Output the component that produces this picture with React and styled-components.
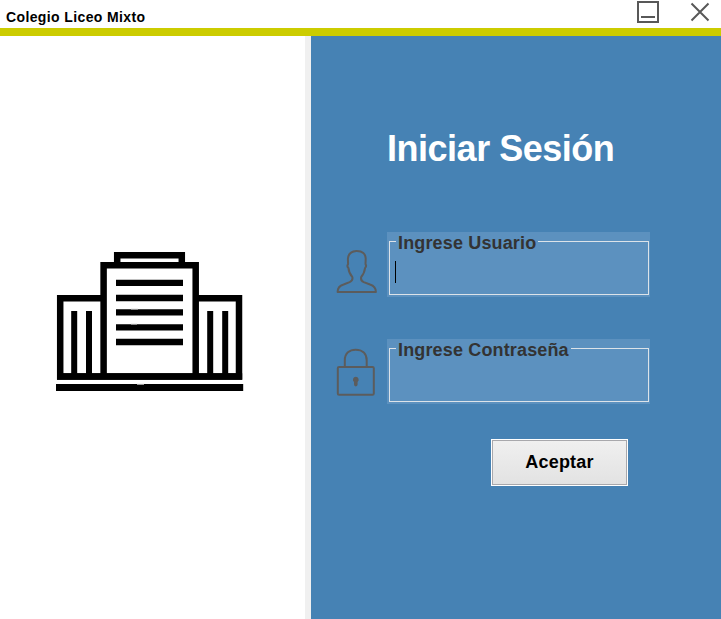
import React from "react";
import styled, { createGlobalStyle } from "styled-components";

const GlobalStyle = createGlobalStyle`
  * { box-sizing: border-box; }
  body { margin: 0; overflow: hidden; font-family: "Liberation Sans", Arial, sans-serif; }
`;

const Window = styled.div`
  width: 721px;
  height: 619px;
  display: flex;
  flex-direction: column;
  background: #fff;
`;

const TitleBar = styled.header`
  height: 36px;
  display: flex;
  justify-content: space-between;
  border-bottom: 8px solid #cccc00;
  padding: 0 10px 0 6px;
`;

const WindowTitle = styled.div`
  font-size: 14px;
  font-weight: bold;
  line-height: 16px;
  letter-spacing: 0.38px;
  padding-top: 9px;
  color: #000;
  white-space: nowrap;
`;

const Controls = styled.div`
  display: flex;
  gap: 29px;
`;

const ControlButton = styled.button`
  display: block;
  border: 0;
  padding: 0;
  background: none;
  width: ${(p) => p.$width}px;
  height: 24px;

  svg { display: block; }
`;

const Body = styled.main`
  flex: 1;
  display: flex;
`;

const LogoPanel = styled.section`
  width: 311px;
  border-right: 6px solid #f0f0f0;
  padding: 214px 0 0 54px;
`;

const LoginPanel = styled.section`
  flex: 1;
  background: #4682b4;
  display: flex;
  flex-direction: column;
  padding-top: 92px;
`;

const Heading = styled.h1`
  margin: 0 0 0 76px;
  font-size: 36px;
  line-height: 42px;
  letter-spacing: -0.48px;
  color: #fff;
  white-space: nowrap;
`;

const Form = styled.form`
  margin-top: 62px;
  display: flex;
  flex-direction: column;
  gap: 42px;
`;

const FieldRow = styled.div`
  display: flex;
  height: 65px;
  padding-left: 22px;
`;

const IconCell = styled.div`
  width: 54px;
  padding: ${(p) => p.$top}px 0 0 2px;

  svg { display: block; }
`;

const FieldBox = styled.div`
  width: 263px;
  height: 65px;
  padding: 0 1px 2px 2px;
  background: #5c91bf;
`;

const FieldFrame = styled.fieldset`
  height: 63px;
  min-width: 0;
  margin: 0;
  padding: 0 5px;
  border: 1px solid #dce3e9;
`;

const Legend = styled.legend`
  height: 19px;
  margin-left: 1px;
  padding: 1px 2px 0 2px;
  font-size: 18px;
  line-height: 20px;
  letter-spacing: 0.15px;
  font-weight: bold;
  color: #333;
  white-space: nowrap;
`;

const Input = styled.input`
  display: block;
  width: 100%;
  height: 42px;
  border: 0;
  padding: 0;
  outline: none;
  background: transparent;
  font: 18px "Liberation Sans", Arial, sans-serif;
  color: #000;
`;

const CaretInput = styled.div`
  width: 1px;
  height: 22px;
  margin-top: 10px;
  background: #000;
`;

const Submit = styled.button`
  align-self: flex-start;
  margin: -7px 0 0 180px;
  width: 137px;
  height: 47px;
  border: 1px solid #fff;
  box-shadow: inset 0 0 0 1px #a8a8ac;
  background: linear-gradient(#f0f0f0, #e2e2e2);
  padding: 0;
  font: bold 18px "Liberation Sans", Arial, sans-serif;
  letter-spacing: 0.2px;
  color: #000;
`;

const SchoolLogo = () => (
  <svg width="192" height="144" viewBox="54 250 192 144">
    <g fill="none" stroke="#000" strokeWidth="6.5">
      <path d="M117.2 265V255.2H181.8V265" />
      <path d="M103.6 376V265.2H195.7V376" />
      <path d="M103 298.2H60.2V376.5H239V298.2H196" />
      <path d="M57 376.5H242.2" />
      <path strokeWidth="6" d="M74.2 311V376M89 311V376M210.2 311V376M225.2 311V376" />
      <path strokeWidth="6.3" d="M116 282.8H183M116 298H183M116 312.4H183M116 327.4H183M116 342H183" />
      <path strokeWidth="7" d="M56 387.5H243.2" />
    </g>
    <path d="M131 309H138M131 324H137M137 384.2H144" stroke="#ddd" strokeWidth="1" />
  </svg>
);

const UserIcon = () => (
  <svg width="42" height="46" viewBox="-0.6 -0.3 42 46" fill="none" stroke="#5c5c5c" strokeWidth="2" strokeLinejoin="round">
    <path d="M2 42.7C2 38.5 4 36.4 8 35.2L14 32.8C16.5 31.6 17.4 30.2 16.7 27.6C14.2 25 13.1 21.8 12.8 18.6C11.7 17.5 11.6 16 12.5 14.8L12.3 9.5C12.6 4.8 15 2.2 20.7 1.7C27 1.5 30 4.7 30.1 9.2L29.9 14.8C30.8 16.2 30.5 17.6 29.5 18.6C29 22 27.9 25.1 25.7 27.4C24.9 30 25.6 31.6 28.2 32.8L34.4 35.2C38.5 36.5 40.3 38.6 40.3 42.7Z" />
  </svg>
);

const LockIcon = () => (
  <svg width="42" height="50" viewBox="0 -0.4 42 50" fill="none" stroke="#5c5c5c" strokeWidth="2">
    <rect x="2.8" y="19.6" width="36" height="27.8" rx="1.3" />
    <path d="M9.8 19.5V13C9.8 5.8 14.5 2.3 20.7 2.3S31.7 5.8 31.7 13V19.5" />
    <path d="M20.8 29.3A3 3 0 0 0 19 34.6V37.2A1.8 1.8 0 0 0 22.6 37.2V34.6A3 3 0 0 0 20.8 29.3Z" fill="#5c5c5c" stroke="none" />
  </svg>
);

export default function App() {
  return (
    <>
      <GlobalStyle />
      <Window>
        <TitleBar>
          <WindowTitle>Colegio Liceo Mixto</WindowTitle>
          <Controls>
            <ControlButton $width={24} aria-label="Minimizar">
              <svg width="24" height="24" fill="none" stroke="#585858" strokeWidth="2">
                <path d="M2 2H22V22H2ZM5 17H19" />
              </svg>
            </ControlButton>
            <ControlButton $width={22} aria-label="Cerrar">
              <svg width="22" height="24" fill="none" stroke="#585858" strokeWidth="2">
                <path d="M2.5 3.5L19.5 20.5M19.5 3.5L2.5 20.5" />
              </svg>
            </ControlButton>
          </Controls>
        </TitleBar>
        <Body>
          <LogoPanel>
            <SchoolLogo />
          </LogoPanel>
          <LoginPanel>
            <Heading>Iniciar Sesión</Heading>
            <Form>
              <FieldRow>
                <IconCell $top={17}><UserIcon /></IconCell>
                <FieldBox>
                  <FieldFrame>
                    <Legend>Ingrese Usuario</Legend>
                    <CaretInput />
                  </FieldFrame>
                </FieldBox>
              </FieldRow>
              <FieldRow>
                <IconCell $top={8}><LockIcon /></IconCell>
                <FieldBox>
                  <FieldFrame>
                    <Legend>Ingrese Contraseña</Legend>
                    <Input type="password" aria-label="Ingrese Contraseña" />
                  </FieldFrame>
                </FieldBox>
              </FieldRow>
              <Submit type="button">Aceptar</Submit>
            </Form>
          </LoginPanel>
        </Body>
      </Window>
    </>
  );
}
